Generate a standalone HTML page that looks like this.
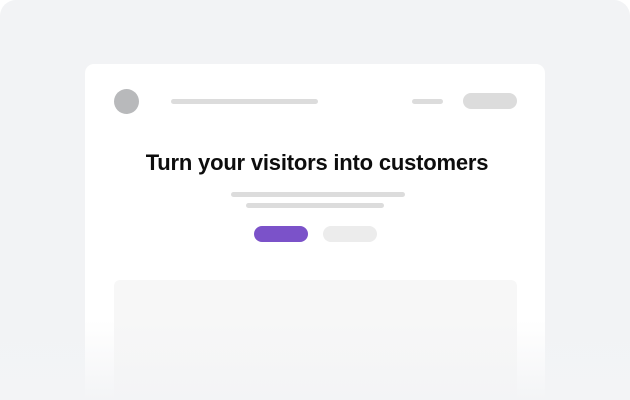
<!DOCTYPE html>
<html><head><style>
html,body{margin:0;padding:0;width:630px;height:400px;overflow:hidden;background:#fff}
.wrap{position:relative;width:630px;height:400px;overflow:hidden}
.bg{position:absolute;left:0;top:0;width:630px;height:400px;background:#f2f3f5;border-radius:16px 16px 0 0}
.card{position:absolute;left:85px;top:64px;width:460px;height:336px;background:#fff;border-radius:9px 9px 0 0}
.a{position:absolute}
.fade{position:absolute;left:0;top:320px;width:630px;height:80px;background:linear-gradient(rgba(243,244,246,0),#f3f4f6)}
h1{position:absolute;left:0;width:634px;top:148px;margin:0;text-align:center;font:bold 22px/30px "Liberation Sans",sans-serif;color:#0d0d0d;letter-spacing:-0.2px}
</style></head><body><div class="wrap">
<div class="bg"></div>
<div class="card"></div>
<div class="a" style="left:114px;top:89px;width:25px;height:25px;border-radius:50%;background:#b8b9bb"></div>
<div class="a" style="left:171px;top:99px;width:147px;height:5px;border-radius:3px;background:#dcdcdc"></div>
<div class="a" style="left:412px;top:99px;width:31px;height:5px;border-radius:3px;background:#dcdcdc"></div>
<div class="a" style="left:463px;top:93px;width:54px;height:16px;border-radius:8px;background:#dcdcdc"></div>
<h1>Turn your visitors into customers</h1>
<div class="a" style="left:231px;top:192px;width:174px;height:5px;border-radius:3px;background:#dcdcdc"></div>
<div class="a" style="left:246px;top:203px;width:138px;height:5px;border-radius:3px;background:#dcdcdc"></div>
<div class="a" style="left:254px;top:226px;width:54px;height:16px;border-radius:8px;background:#7b52c9"></div>
<div class="a" style="left:323px;top:226px;width:54px;height:16px;border-radius:8px;background:#ececec"></div>
<div class="a" style="left:114px;top:280px;width:403px;height:120px;border-radius:6px 6px 0 0;background:#f7f7f7"></div>
<div class="fade"></div>
</div></body></html>
